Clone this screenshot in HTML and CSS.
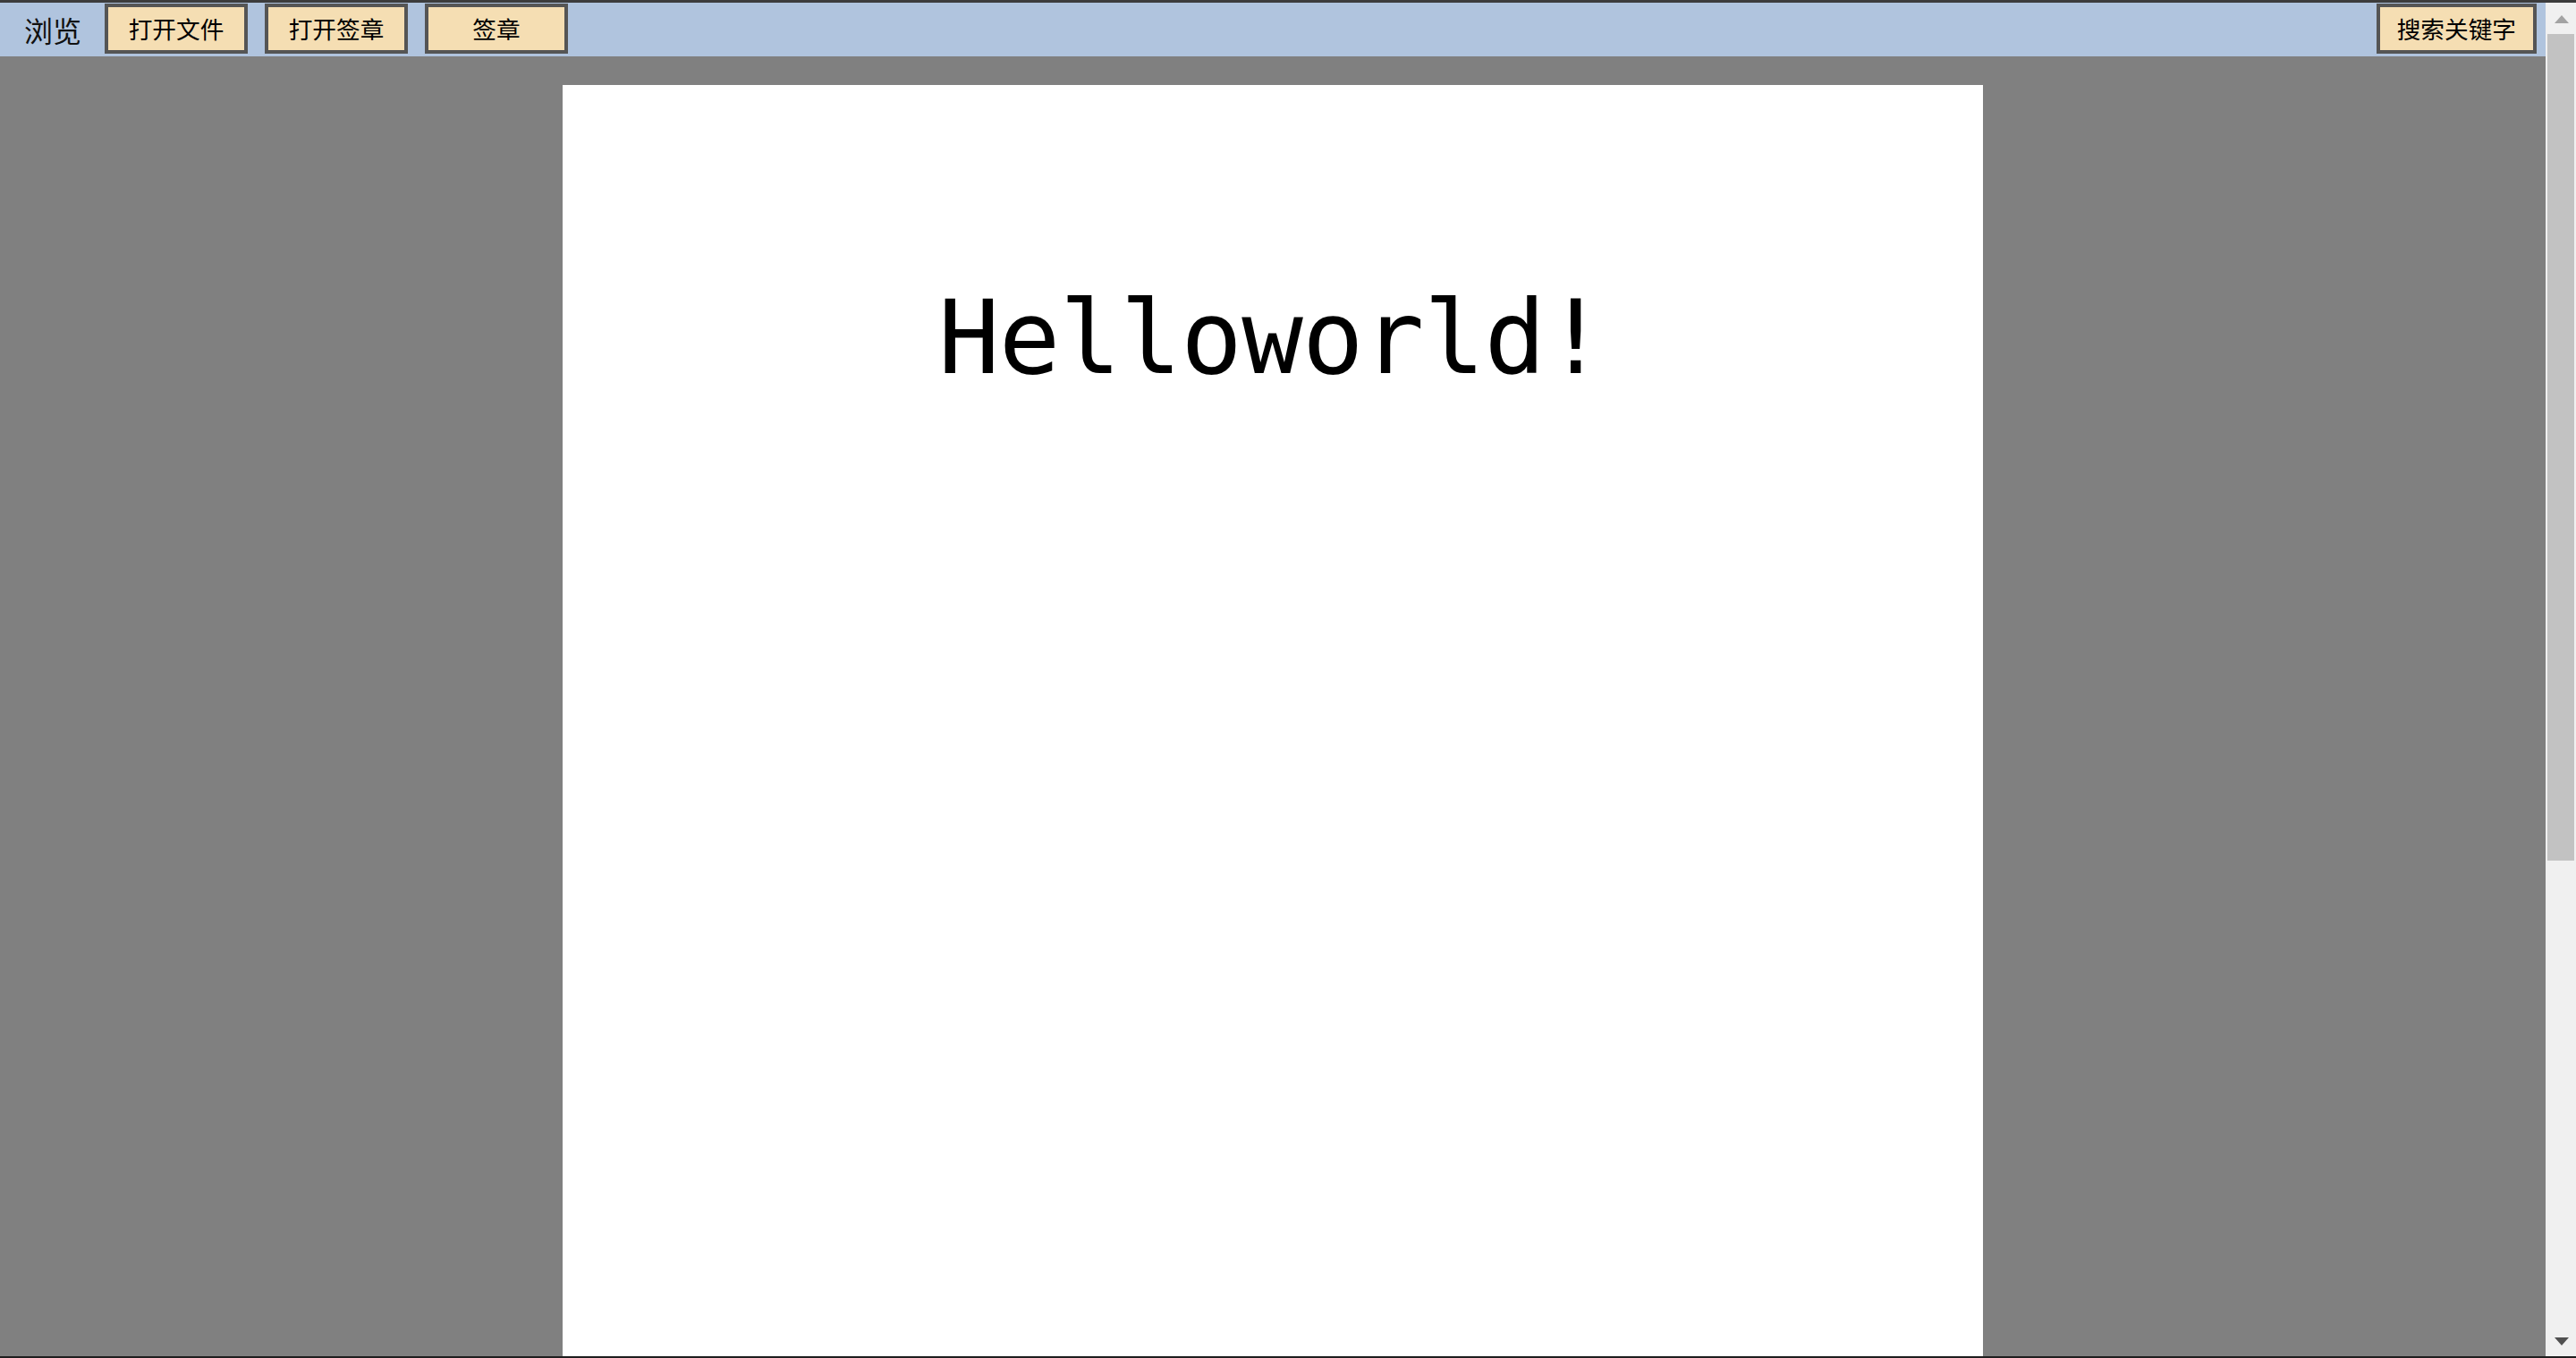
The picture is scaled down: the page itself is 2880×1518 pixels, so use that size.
FILE: index.html
```html
<!DOCTYPE html>
<html lang="zh-CN">
<head>
<meta charset="utf-8">
<title>浏览</title>
<link rel="stylesheet" href="styles.css">
</head>
<body>
<div class="app">
  <div class="toolbar">
    <span class="label">浏览</span>
    <button class="btn">打开文件</button>
    <button class="btn">打开签章</button>
    <button class="btn">签章</button>
    <button class="btn btn-search">搜索关键字</button>
  </div>
  <div class="viewer">
    <div class="page">
      <div class="page-text">Helloworld!</div>
    </div>
  </div>
</div>
<div class="scrollbar">
  <div class="sb-btn"><span class="tri-up"></span></div>
  <div class="sb-thumb"></div>
  <div class="sb-rest"></div>
  <div class="sb-btn sb-btn-down"><span class="tri-down"></span></div>
</div>
</body>
</html>
```
FILE: styles.css
```css
html, body {
  margin: 0;
  padding: 0;
}
body {
  height: 100vh;
  box-sizing: border-box;
  border-top: 3px solid #3c3c3c;
  border-bottom: 2px solid #1e1e1e;
  display: flex;
  overflow: hidden;
  font-family: "Noto Sans CJK SC", "Noto Sans", sans-serif;
}
.app {
  flex: 1;
  display: flex;
  flex-direction: column;
  min-width: 0;
}
.toolbar {
  height: 60px;
  flex-shrink: 0;
  background: #b0c4de;
  display: flex;
  align-items: flex-start;
  padding-top: 1px;
  box-sizing: border-box;
}
.label {
  font-size: 32px;
  line-height: 58px;
  padding-left: 27px;
  margin-right: 26px;
  color: #111;
}
.btn {
  height: 56px;
  width: 160px;
  box-sizing: border-box;
  border: 4px solid #555555;
  background: #f5deb3;
  font-family: "Noto Sans CJK SC", sans-serif;
  font-size: 26.67px;
  color: #000;
  padding: 0;
  margin: 0 19px 0 0;
  line-height: 1;
  border-radius: 0;
}
.btn-search {
  width: auto;
  padding: 0 19px;
  margin-left: auto;
  margin-right: 10px;
}
.viewer {
  flex: 1;
  background: #808080;
  overflow: hidden;
  padding-top: 32px;
  display: flex;
  justify-content: center;
  align-items: flex-start;
}
.page {
  width: 1588px;
  height: 2200px;
  flex-shrink: 0;
  background: #ffffff;
  box-sizing: border-box;
  padding: 216px 0 0 420px;
}
.page-text {
  font-family: "DejaVu Sans Mono", monospace;
  font-size: 114px;
  letter-spacing: -0.8px;
  color: #000;
  white-space: nowrap;
}
.scrollbar {
  width: 34px;
  flex-shrink: 0;
  background: #f0f0f0;
  display: flex;
  flex-direction: column;
}
.sb-btn {
  height: 35px;
  flex-shrink: 0;
  display: flex;
  justify-content: center;
  align-items: center;
  padding-left: 1px;
}
.tri-up {
  width: 0;
  height: 0;
  border-left: 8px solid transparent;
  border-right: 8px solid transparent;
  border-bottom: 9px solid #a3a3a3;
  margin-top: 2px;
}
.tri-down {
  width: 0;
  height: 0;
  border-left: 8px solid transparent;
  border-right: 8px solid transparent;
  border-top: 9px solid #505050;
  margin-top: 2px;
}
.sb-thumb {
  height: 924px;
  flex-shrink: 0;
  margin: 0 2px;
  background: #c2c2c2;
}
.sb-rest {
  flex: 1;
}
```
